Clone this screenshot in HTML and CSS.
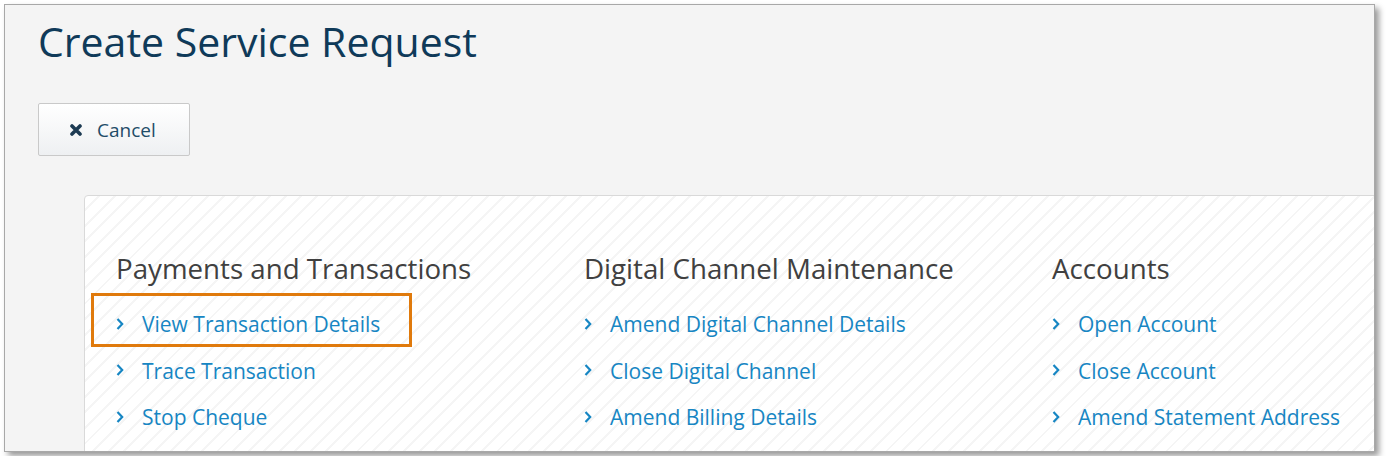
FILE: index.html
```html
<!DOCTYPE html>
<html lang="en">
<head>
    <meta charset="UTF-8">
    <title>Create Service Request</title>
    <link rel="stylesheet" href="styles.css">
</head>
<body>
    <div class="frame">
        <h1 class="page-title">Create Service Request</h1>

        <button type="button" class="cancel-button">
            <svg class="cancel-icon" width="12" height="12" viewBox="0 0 12 12">
                <path d="M2 2 L10 10 M10 2 L2 10" stroke="#1d3b53" stroke-width="3.6" stroke-linecap="round"/>
            </svg>
            Cancel
        </button>

        <div class="request-card">
            <div class="request-columns">
                <div class="request-group">
                    <h2>Payments and Transactions</h2>
                    <ul>
                        <li class="highlight">
                            <svg class="chevron" width="8" height="12" viewBox="0 0 8 12"><path d="M1.5 1 L6.2 6 L1.5 11" fill="none" stroke="#1786c3" stroke-width="2.2"/></svg>
                            <a href="#">View Transaction Details</a>
                        </li>
                        <li>
                            <svg class="chevron" width="8" height="12" viewBox="0 0 8 12"><path d="M1.5 1 L6.2 6 L1.5 11" fill="none" stroke="#1786c3" stroke-width="2.2"/></svg>
                            <a href="#">Trace Transaction</a>
                        </li>
                        <li>
                            <svg class="chevron" width="8" height="12" viewBox="0 0 8 12"><path d="M1.5 1 L6.2 6 L1.5 11" fill="none" stroke="#1786c3" stroke-width="2.2"/></svg>
                            <a href="#">Stop Cheque</a>
                        </li>
                    </ul>
                </div>
                <div class="request-group">
                    <h2>Digital Channel Maintenance</h2>
                    <ul>
                        <li>
                            <svg class="chevron" width="8" height="12" viewBox="0 0 8 12"><path d="M1.5 1 L6.2 6 L1.5 11" fill="none" stroke="#1786c3" stroke-width="2.2"/></svg>
                            <a href="#">Amend Digital Channel Details</a>
                        </li>
                        <li>
                            <svg class="chevron" width="8" height="12" viewBox="0 0 8 12"><path d="M1.5 1 L6.2 6 L1.5 11" fill="none" stroke="#1786c3" stroke-width="2.2"/></svg>
                            <a href="#">Close Digital Channel</a>
                        </li>
                        <li>
                            <svg class="chevron" width="8" height="12" viewBox="0 0 8 12"><path d="M1.5 1 L6.2 6 L1.5 11" fill="none" stroke="#1786c3" stroke-width="2.2"/></svg>
                            <a href="#">Amend Billing Details</a>
                        </li>
                    </ul>
                </div>
                <div class="request-group">
                    <h2>Accounts</h2>
                    <ul>
                        <li>
                            <svg class="chevron" width="8" height="12" viewBox="0 0 8 12"><path d="M1.5 1 L6.2 6 L1.5 11" fill="none" stroke="#1786c3" stroke-width="2.2"/></svg>
                            <a href="#">Open Account</a>
                        </li>
                        <li>
                            <svg class="chevron" width="8" height="12" viewBox="0 0 8 12"><path d="M1.5 1 L6.2 6 L1.5 11" fill="none" stroke="#1786c3" stroke-width="2.2"/></svg>
                            <a href="#">Close Account</a>
                        </li>
                        <li>
                            <svg class="chevron" width="8" height="12" viewBox="0 0 8 12"><path d="M1.5 1 L6.2 6 L1.5 11" fill="none" stroke="#1786c3" stroke-width="2.2"/></svg>
                            <a href="#">Amend Statement Address</a>
                        </li>
                    </ul>
                </div>
            </div>
        </div>
    </div>
</body>
</html>
```

FILE: styles.css
```css
body {
    margin: 0;
    padding: 4px;
    background: #ffffff;
    font-family: 'Open Sans', 'Liberation Sans', sans-serif;
}

.frame {
    width: 1371px;
    height: 448px;
    box-sizing: border-box;
    border: 1px solid #a8a8a8;
    box-shadow: 4px 4px 6px rgba(0, 0, 0, 0.4);
    background: #f4f4f4;
    overflow: hidden;
    padding-left: 33px;
}

.page-title {
    margin: 12px 0 0;
    font-size: 41px;
    line-height: 48px;
    font-weight: 400;
    color: #0f3a59;
}

.cancel-button {
    margin-top: 38px;
    width: 152px;
    height: 53px;
    padding: 0 0 0 31px;
    display: flex;
    align-items: center;
    gap: 15px;
    border: 1px solid #c9c9c9;
    border-radius: 2px;
    background: linear-gradient(to bottom, #ffffff, #eef0f2);
    font-family: inherit;
    font-size: 19px;
    color: #1f4c68;
    cursor: pointer;
}

.request-card {
    margin-top: 39px;
    margin-left: 46px;
    width: 1400px;
    height: 300px;
    border: 1px solid #d9d9d9;
    border-radius: 4px;
    background-color: #ffffff;
    background-image: repeating-linear-gradient(135deg, #ffffff 0, #ffffff 9px, #f5f5f5 9px, #f5f5f5 11px);
    padding: 55px 0 0 31px;
    box-sizing: border-box;
}

.request-columns {
    display: grid;
    grid-template-columns: 468px 468px 468px;
}

.request-group h2 {
    margin: 0 0 16px;
    font-size: 27.7px;
    line-height: 34px;
    font-weight: 400;
    color: #404040;
}

.request-group ul {
    list-style: none;
    margin: 0;
    padding: 0;
}

.request-group li {
    position: relative;
    display: flex;
    align-items: center;
    gap: 18px;
    height: 46.5px;
    font-size: 21px;
}

.chevron {
    flex: none;
    margin-top: -1px;
}

.request-group a {
    color: #1786c3;
    text-decoration: none;
}

.highlight::after {
    content: "";
    position: absolute;
    left: -25px;
    top: -8px;
    width: 315px;
    height: 48px;
    border: 3px solid #e07a0c;
}
```
